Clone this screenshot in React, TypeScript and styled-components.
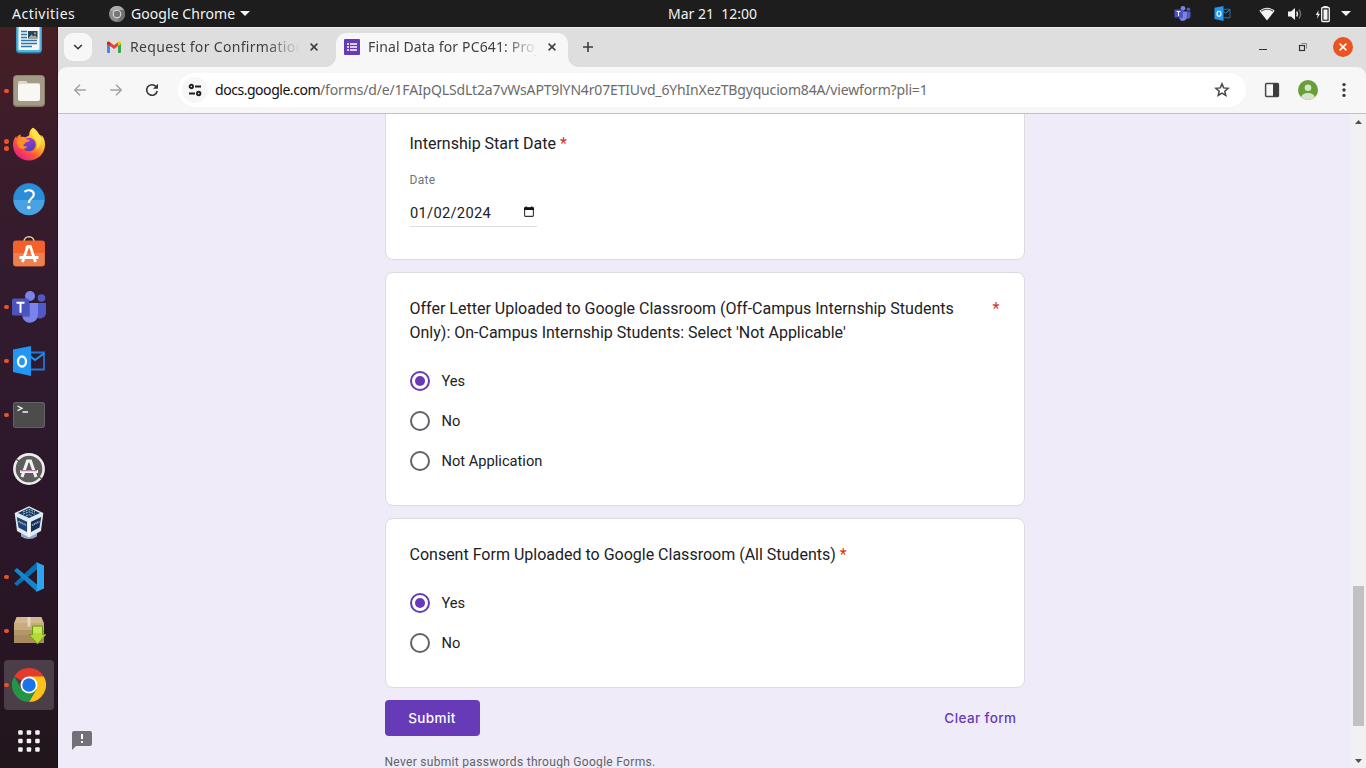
import React from "react";
import styled, { createGlobalStyle, css } from "styled-components";

const Global = createGlobalStyle`
  * { box-sizing: border-box; }
  html, body { margin: 0; padding: 0; overflow: hidden; }
  body { font-family: "Noto Sans", "Open Sans", sans-serif; }
  svg { display: block; flex: none; }
`;

const Desktop = styled.div`
  width: 1366px;
  height: 768px;
  display: flex;
  flex-direction: column;
  overflow: hidden;
  background: #1d1d1d;
`;

const TopBar = styled.header`
  height: 27px;
  flex: none;
  display: grid;
  grid-template-columns: 1fr auto 1fr;
  align-items: center;
  padding: 0 15px 0 12px;
  background: #1d1d1d;
  color: #f2f2f2;
  font-size: 14px;
  line-height: 27px;
`;

const BarGroup = styled.div<{ $end?: boolean }>`
  display: flex;
  align-items: center;
  justify-content: ${(p) => (p.$end ? "flex-end" : "flex-start")};
`;

const BarText = styled.span<{ $spacing?: number; $width?: number; $ml?: number }>`
  white-space: pre;
  letter-spacing: ${(p) => p.$spacing ?? 0}px;
  width: ${(p) => (p.$width ? `${p.$width}px` : "auto")};
  margin-left: ${(p) => p.$ml ?? 0}px;
`;

const TrayItem = styled.span<{ $ml: number }>`
  display: flex;
  margin-left: ${(p) => p.$ml}px;
`;

const Workspace = styled.div`
  flex: 1;
  min-height: 0;
  display: flex;
`;

const Dock = styled.nav`
  width: 58px;
  flex: none;
  overflow: hidden;
  background: linear-gradient(#471f24 0%, #3b1c2b 16%, #321b2e 35%, #2c172a 62%, #271523 85%, #21161c 100%);
  border-right: 1px solid rgba(0, 0, 0, 0.25);
`;

const DockList = styled.div`
  margin-top: -17px;
  display: flex;
  flex-direction: column;
`;

const DockItem = styled.div`
  height: 54px;
  display: grid;
  grid-template-columns: 4px 50px;
  align-items: center;
`;

const DockTile = styled.div<{ $active?: boolean; $shift?: number }>`
  height: 50px;
  display: flex;
  align-items: center;
  justify-content: center;
  border-radius: 4px;
  background: ${(p) => (p.$active ? "#4c3e49" : "transparent")};
  position: relative;
  & > svg {
    transform: translateY(${(p) => p.$shift ?? 0}px);
  }
`;

const Dots = styled.span`
  position: absolute;
  left: 0;
  top: 0;
  bottom: 0;
  display: flex;
  flex-direction: column;
  justify-content: center;
  gap: 2px;
  i {
    width: 4.6px;
    height: 4.6px;
    border-radius: 50%;
    background: #e95420;
  }
`;

const Browser = styled.main`
  flex: 1;
  min-width: 0;
  display: flex;
  flex-direction: column;
  background: #dedede;
`;

const TabStrip = styled.div`
  height: 40px;
  flex: none;
  display: flex;
  align-items: flex-start;
  padding: 5px 13px 0 6px;
  border-top: 1px solid #ededed;
  color: #3f3f3f;
`;

const TabSearch = styled.div`
  width: 28px;
  height: 28px;
  border-radius: 9px;
  background: #f7f7f7;
  display: flex;
  align-items: center;
  justify-content: center;
`;

const Tab = styled.div<{ $active?: boolean }>`
  width: ${(p) => (p.$active ? 232 : 244)}px;
  height: 34px;
  display: flex;
  align-items: center;
  padding: 0 8px 6px ${(p) => (p.$active ? 8 : 14)}px;
  position: relative;
  ${(p) =>
    p.$active &&
    css`
      background: #f7f7f7;
      border-radius: 10px 10px 0 0;
      &::before,
      &::after {
        content: "";
        position: absolute;
        bottom: 0;
        width: 10px;
        height: 10px;
      }
      &::before {
        left: -10px;
        background: radial-gradient(circle at 0 0, transparent 9.5px, #f7f7f7 10px);
      }
      &::after {
        right: -10px;
        background: radial-gradient(circle at 100% 0, transparent 9.5px, #f7f7f7 10px);
      }
    `}
`;

const TabTitle = styled.span<{ $spacing: number }>`
  width: 168px;
  margin-left: 8px;
  overflow: hidden;
  white-space: nowrap;
  font-size: 14px;
  line-height: 20px;
  letter-spacing: ${(p) => p.$spacing}px;
  mask-image: linear-gradient(90deg, #000 136px, transparent 170px);
`;

const TabClose = styled.span`
  width: 16px;
  height: 16px;
  margin-left: 8px;
  display: flex;
  align-items: center;
  justify-content: center;
`;

const NewTab = styled.span`
  width: 28px;
  height: 28px;
  margin-left: 6px;
  display: flex;
  align-items: center;
  justify-content: center;
`;

const WindowControls = styled.div`
  flex: 1;
  height: 28px;
  display: flex;
  align-items: center;
  justify-content: flex-end;
`;

const CloseWindow = styled.span`
  width: 20px;
  height: 20px;
  margin-left: 26px;
  border-radius: 50%;
  background: #e95420;
  display: flex;
  align-items: center;
  justify-content: center;
`;

const Toolbar = styled.div`
  height: 47px;
  flex: none;
  display: flex;
  align-items: center;
  padding: 0 12px 0 14px;
  background: #f7f7f7;
  border-bottom: 1px solid #c2c2c2;
  border-radius: 9px 9px 0 0;
`;

const NavButton = styled.span<{ $mr: number }>`
  width: 16px;
  height: 16px;
  margin-right: ${(p) => p.$mr}px;
`;

const Omnibox = styled.div`
  width: 1068px;
  height: 34px;
  border-radius: 17px;
  background: #fff;
  display: flex;
  align-items: center;
  padding: 0 16px 0 4px;
`;

const SiteInfo = styled.span`
  width: 26px;
  height: 26px;
  border-radius: 50%;
  background: #f7f7f7;
  display: flex;
  align-items: center;
  justify-content: center;
`;

const Url = styled.span`
  flex: 1;
  margin-left: 7px;
  font-size: 14px;
  line-height: 20px;
  color: #6b6b6b;
  white-space: nowrap;
`;

const UrlPart = styled.span<{ $strong?: boolean; $spacing: number }>`
  color: ${(p) => (p.$strong ? "#111" : "#6b6b6b")};
  letter-spacing: ${(p) => p.$spacing}px;
`;

const ToolIcon = styled.span<{ $ml: number }>`
  margin-left: ${(p) => p.$ml}px;
`;

const Viewport = styled.div`
  flex: 1;
  min-height: 0;
  display: flex;
  background: #efebf8;
`;

const Page = styled.div`
  flex: 1;
  overflow: hidden;
  position: relative;
  padding-left: 326.5px;
  font-family: Roboto, "Liberation Sans", sans-serif;
  color: #202124;
`;

const Form = styled.div`
  width: 640px;
  margin-top: -7px;
  display: flex;
  flex-direction: column;
  gap: 12px;
`;

const Card = styled.section`
  background: #fff;
  border: 1px solid #dadce0;
  border-radius: 8px;
  padding: 24px;
`;

const QuestionRow = styled.div`
  display: flex;
  justify-content: space-between;
`;

const Question = styled.div`
  font-size: 16px;
  line-height: 24px;
  white-space: pre;
`;

const Required = styled.span`
  color: #d93025;
  font-size: 16px;
  line-height: 24px;
`;

const DateLabel = styled.div`
  margin-top: 16px;
  font-size: 12px;
  line-height: 16px;
  letter-spacing: 0.3px;
  color: #70757a;
`;

const DateField = styled.div`
  width: 127px;
  height: 31px;
  margin: 8px 0 8px;
  padding: 3px 3px 0 0.5px;
  display: flex;
  align-items: center;
  justify-content: space-between;
  border-bottom: 1px solid #dcdcdc;
  font-size: 14.67px;
  letter-spacing: 0.3px;
  span {
    padding-top: 1px;
  }
  svg {
    margin-top: -1px;
  }
`;

const Options = styled.div`
  margin-top: 16px;
`;

const Option = styled.label`
  height: 40px;
  display: flex;
  align-items: center;
  gap: 12px;
  font-size: 14.67px;
`;

const Radio = styled.span<{ $on?: boolean }>`
  width: 20px;
  height: 20px;
  border-radius: 50%;
  border: 2px solid ${(p) => (p.$on ? "#673ab7" : "#5f6368")};
  display: flex;
  align-items: center;
  justify-content: center;
  &::after {
    content: "";
    width: 10px;
    height: 10px;
    border-radius: 50%;
    background: ${(p) => (p.$on ? "#673ab7" : "transparent")};
  }
`;

const Actions = styled.div`
  display: flex;
  justify-content: space-between;
  align-items: center;
  font-family: Inter, sans-serif;
  font-size: 13.5px;
  font-weight: 500;
`;

const Submit = styled.span`
  width: 95px;
  height: 36px;
  border-radius: 4px;
  background: #673ab7;
  color: #fff;
  line-height: 36px;
  text-align: center;
  letter-spacing: 0.4px;
`;

const Clear = styled.span`
  color: #673ab7;
  padding-right: 8px;
  letter-spacing: 0.4px;
`;

const Warning = styled.div`
  margin-top: 6px;
  font-size: 12px;
  line-height: 16px;
  letter-spacing: 0.3px;
  color: #5f6368;
`;

const Feedback = styled.span`
  position: absolute;
  left: 14px;
  bottom: 17px;
`;

const Scrollbar = styled.div`
  width: 15px;
  flex: none;
  display: flex;
  flex-direction: column;
  align-items: center;
  padding: 6px 0 5px;
  background: #f1f1f1;
`;

const Thumb = styled.span`
  width: 11px;
  height: 140px;
  margin-top: auto;
  margin-bottom: 33px;
  background: #c1c1c1;
`;

const DocsIcon = () => (
  <svg width="34" height="34" viewBox="0 0 34 34">
    <rect x="4" y="2" width="26" height="31" rx="4" fill="#2683ad" />
    <rect x="4.5" y="2" width="25" height="29.500" rx="3" fill="#4fb5dd" />
    <rect x="6.500" y="3" width="21" height="26.500" rx="1.500" fill="#f6f6f6" />
    <path d="M9 11h6M9 14h6M9 17h6M9 20h16M9 23h16M9 26h11" stroke="#2a77ae" strokeWidth="1.300" />
    <rect x="16" y="10.500" width="9.500" height="7.500" fill="#26465f" />
    <path d="M16 18l3.500-4 2 2 1.500-1.500 2.500 3.500z" fill="#b9a48a" />
    <circle cx="23" cy="12.700" r="1" fill="#f0a04b" />
  </svg>
);

const FilesIcon = () => (
  <svg width="34" height="34" viewBox="0 0 34 34">
    <rect x="1" y="1" width="32" height="32" rx="4" fill="#837b69" />
    <rect x="1.800" y="1.800" width="30.400" height="29.600" rx="3.500" fill="#a39b86" />
    <path d="M6 8.500q0-1.500 1.500-1.500h6q1 0 1.600 1l.7 1h10.700q1.500 0 1.500 1.500v10H6z" fill="#ddd8cb" />
    <rect x="6" y="10" width="22" height="17" rx="2" fill="#f8f7f4" />
  </svg>
);

const FirefoxIcon = () => (
  <svg width="34" height="34" viewBox="0 0 34 34">
    <defs>
      <linearGradient id="ffBody" x1="0.85" y1="0.1" x2="0.2" y2="0.95">
        <stop offset="0" stopColor="#fff04d" />
        <stop offset="0.35" stopColor="#ffb52b" />
        <stop offset="0.65" stopColor="#ff5a36" />
        <stop offset="1" stopColor="#e8198b" />
      </linearGradient>
      <linearGradient id="ffGlobe" x1="0" y1="0" x2="0.3" y2="1">
        <stop offset="0" stopColor="#b335e6" />
        <stop offset="1" stopColor="#5640b5" />
      </linearGradient>
    </defs>
    <path
      d="M21 .8c2.800 1.800 4.500 4 5.600 6.300.9.400 2.200 1.500 3 2.800.2-.5 0-1.500-.2-2.100C32 10.500 33 14 33 17.500 33 26.600 26 33.500 17 33.500S1 26.500 1 18c0-3.700 1-6.700 3.300-9.100l.2 2.300C5.600 9.200 7 8 8.300 7.300l.5 2.700c1.500-.5 3.200-.4 5 .2.500-.3 2.800-1.200 3.400-1.900C17 5 18.500 2.300 21 .8z"
      fill="url(#ffBody)"
    />
    <circle cx="17" cy="17.500" r="6.800" fill="url(#ffGlobe)" />
    <path
      d="M5 13.500c2-2 5-2.700 8.500-2 .9.900 2.500 1.400 4.200 1.400-.3 1.400-1.900 2-3.700 2.400-.7 1.300-2.200 1.500-2.700 3 .8 1.200 2.500 1.500 4.200.9-1.700 2.500-4 3.100-6.500 2.300C6.500 20.500 4.300 17 5 13.500z"
      fill="#ff9226"
    />
    <path d="M21 .8c-2.500 4-1.700 7.200 1.500 10.500 3.200 3.200 3.700 7.200 1.700 11.200 5-3 6.300-9.500 3.300-13.500C26.500 5.500 24 2.600 21 .8z" fill="#ffe14a" />
  </svg>
);

const HelpIcon = () => (
  <svg width="34" height="34" viewBox="0 0 34 34">
    <circle cx="17" cy="17" r="16" fill="#1c6fb3" />
    <circle cx="17" cy="17" r="15.300" fill="#2b8cd8" />
    <path d="M1.700 18h30.600a15.300 15.300 0 0 1-30.600 0z" fill="#49a3e2" />
    <path d="M12.500 9.800c3-2.600 9.300-2 9.300 2.600 0 4-5 3.800-5 8.600" fill="none" stroke="#fff" strokeWidth="2.200" />
    <circle cx="16.800" cy="25.500" r="1.800" fill="#fff" />
  </svg>
);

const SoftwareIcon = () => (
  <svg width="34" height="34" viewBox="0 0 34 34">
    <path d="M12 7c0-7 10-7 10 0" fill="none" stroke="#e6cf9e" strokeWidth="1.700" />
    <rect x="1" y="5.500" width="32" height="26" rx="3" fill="#e2632f" />
    <rect x="1.500" y="6" width="31" height="13" rx="3" fill="#f4622a" />
    <path d="M1.500 18h31v10q0 3-3 3h-25q-3 0-3-3z" fill="#ee7f4e" />
    <path d="M10.500 27l5.300-15.500h2.500L23.500 27M7.500 22.500h19" fill="none" stroke="#fff" strokeWidth="2.800" />
    <path d="M14 13l3-1.500" stroke="#fff" strokeWidth="3" />
  </svg>
);

const TeamsIcon = ({ size = 36 }: { size?: number }) => (
  <svg width={size} height={size} viewBox="0 0 36 36">
    <circle cx="19" cy="7" r="5" fill="#7b83eb" />
    <circle cx="30.500" cy="9" r="3.800" fill="#5059c9" />
    <path d="M25 14h9.500q.5 0 .5.800v9a6 6 0 0 1-9 5z" fill="#5059c9" />
    <path d="M12 14h15v11.500a8 8 0 0 1-15.500 3z" fill="#7b83eb" />
    <path d="M12 14h7v14h-7z" fill="#5a62c4" />
    <rect x="1" y="9.500" width="17" height="17" rx="1.500" fill="#4b53bc" />
    <path d="M5.500 13.700h8M9.500 13.700v10" stroke="#fff" strokeWidth="2" />
  </svg>
);

const OutlookIcon = ({ size = 34 }: { size?: number }) => (
  <svg width={size} height={size} viewBox="0 0 34 34">
    <path d="M18 8.500h14v17H18" fill="none" stroke="#1f78d4" strokeWidth="1.800" />
    <path d="M18 12l5 4 9-6.500" fill="none" stroke="#2196f3" strokeWidth="1.800" />
    <path d="M1 5.500L19 2v30L1 28z" fill="#2196f3" />
    <ellipse cx="10" cy="17.500" rx="4" ry="5" fill="none" stroke="#fff" strokeWidth="2.300" />
  </svg>
);

const TerminalIcon = () => (
  <svg width="34" height="34" viewBox="0 0 34 34">
    <rect x="1" y="4" width="32" height="26" rx="3" fill="#6b6b6b" />
    <rect x="1.800" y="4.800" width="30.400" height="24.400" rx="2.500" fill="#4c4c4c" />
    <path d="M5.500 8l4.500 2.300-4.500 2.300M10.500 14h5.500" fill="none" stroke="#f4f4f4" strokeWidth="1.300" />
  </svg>
);

const UpdaterIcon = () => (
  <svg width="34" height="34" viewBox="0 0 34 34">
    <circle cx="17" cy="17" r="14.600" fill="#5d5d5d" stroke="#eeeeea" strokeWidth="2.600" />
    <path d="M4 7l4 3M30 27l-4-3" stroke="#5d5d5d" strokeWidth="1.500" />
    <path d="M10 25l5.500-16h3L24 25M8 19.500h18" fill="none" stroke="#f3f3ef" strokeWidth="3" />
    <path d="M8.500 18.700h16.500" stroke="#a05b9a" strokeWidth="1" />
  </svg>
);

const VirtualBoxIcon = () => (
  <svg width="34" height="34" viewBox="0 0 34 34">
    <path d="M9 26l8-3 8 3v4.500q-8 5-16 0z" fill="#8ea5c4" />
    <path d="M17 .3L31.300 7l-2.300 18L17 31.500 5 25 2.700 7z" fill="#dfe8f3" />
    <path d="M17 1.800l11 5.200-11 5L6 7z" fill="#173d63" />
    <path d="M11 6l6-2.500L23 6M11 8.200l6-2.400 6 2.400M14 10l3-1.400 3 1.400" fill="none" stroke="#b9d0e4" strokeWidth="1" strokeDasharray="2 1" />
    <path d="M4.800 11l10.200 4.700v10.300L6.500 21.600z" fill="#1d4472" />
    <path d="M29.200 11L19 15.700v10.300l8.500-4.400z" fill="#143258" />
    <path d="M6.500 15.500l7.500 3.700M20 19.300l7.500-3.800" stroke="#9fb6d2" strokeWidth="1.700" strokeDasharray="1.300 .6" />
    <path d="M17 13.500v17" stroke="#fff" strokeWidth="1.500" />
  </svg>
);

const CodeIcon = () => (
  <svg width="34" height="34" viewBox="0 0 34 34">
    <path d="M2 23.500l3 2.500L25 9.500V2z" fill="#0b70b3" />
    <path d="M2 10.500L5 8l20 16.500V32z" fill="#1286cf" />
    <path d="M24 2l8 3.500v23L24 32q1-.8 1-2.500v-25Q25 2.800 24 2z" fill="#2ba5f0" />
  </svg>
);

const PackageIcon = () => (
  <svg width="34" height="34" viewBox="0 0 34 34">
    <path d="M4.500 3h25L32 9.500H2z" fill="#d3b78e" />
    <path d="M2 9h30v20H2z" fill="#b59669" />
    <path d="M2 9h30v7H2z" fill="#c7aa7d" />
    <path d="M2 21h30v8H2z" fill="#a98b60" />
    <path d="M15.500 3h3v9.500h-3z" fill="#e5d8c3" />
    <path d="M20.500 12h10v8.500H34L25.500 30 17 20.500h3.500z" fill="#b4da3a" stroke="#739a14" strokeWidth="1" />
    <path d="M21.500 13h8v6h-8z" fill="#c8ea59" />
  </svg>
);

const ChromeIcon = () => (
  <svg width="34" height="34" viewBox="0 0 48 48">
    <path d="M24 24L3.200 12A24 24 0 0 1 44.800 12z" fill="#e33b2e" />
    <path d="M24 12h20.800A24 24 0 0 1 24 48l10.400-18z" fill="#fcc016" />
    <path d="M3.200 12A24 24 0 0 0 24 48l10.400-18L13.600 30z" fill="#249547" />
    <circle cx="24" cy="24" r="12" fill="#fff" />
    <circle cx="24" cy="24" r="9.500" fill="#1a73e8" />
  </svg>
);

const AppsIcon = () => (
  <svg width="24" height="24" viewBox="0 0 24 24">
    {[1.2, 9.7, 18.2].map((y) =>
      [1.2, 9.7, 18.2].map((x) => <rect key={`${x}-${y}`} x={x} y={y} width="4.500" height="4.500" rx="1" fill="#f2f2f2" />)
    )}
  </svg>
);

const CrossIcon = ({ color = "#3c3c3c", size = 8 }: { color?: string; size?: number }) => (
  <svg width={size} height={size} viewBox="0 0 8 8">
    <path d="M.6.6l6.800 6.800M7.400.6L.6 7.400" stroke={color} strokeWidth="1.500" />
  </svg>
);

const Triangle = ({ up, color = "#f2f2f2", w = 10, h = 5 }: { up?: boolean; color?: string; w?: number; h?: number }) => (
  <svg width={w} height={h} viewBox="0 0 10 5" preserveAspectRatio="none">
    <path d={up ? "M0 5h10L5 0z" : "M0 0h10L5 5z"} fill={color} />
  </svg>
);

const BackIcon = () => (
  <svg width="16" height="16" viewBox="0 0 16 16">
    <path d="M13.800 8H3M8 2.700L2.700 8 8 13.300" fill="none" stroke="#a3a3a3" strokeWidth="1.500" />
  </svg>
);

const ForwardIcon = () => (
  <svg width="16" height="16" viewBox="0 0 16 16">
    <path d="M2.200 8H13M8 2.700L13.300 8 8 13.300" fill="none" stroke="#a3a3a3" strokeWidth="1.500" />
  </svg>
);

const ReloadIcon = () => (
  <svg width="16" height="16" viewBox="0 0 16 16">
    <path d="M13.200 9A5.300 5.300 0 1 1 12 4.500" fill="none" stroke="#383838" strokeWidth="1.600" />
    <path d="M14 1.800v5H9z" fill="#383838" />
  </svg>
);

const GmailIcon = () => (
  <svg width="16" height="16" viewBox="0 0 16 16">
    <path d="M1 4.500l3 2.300V14H2q-1 0-1-1z" fill="#4285f4" />
    <path d="M15 4.500l-3 2.300V14h2q1 0 1-1z" fill="#34a853" />
    <path d="M4 3.200l4 3 4-3v3.900l-4 3-4-3z" fill="#ea4335" />
    <path d="M1 4.200C1 2.300 2.700 2 4 3.200v3.900L1 4.900z" fill="#c5221f" />
    <path d="M15 4.200c0-1.900-1.700-2.200-3-1v3.900l3-2.200z" fill="#fbbc04" />
  </svg>
);

const FormsIcon = () => (
  <svg width="16" height="16" viewBox="0 0 16 16">
    <rect width="16" height="16" rx="1" fill="#673ab7" />
    <path d="M3 5h2M6 5h7M3 8h2M6 8h7M3 11h2M6 11h7" stroke="#fff" strokeWidth="1.700" />
  </svg>
);

const SiteIcon = () => (
  <svg width="14" height="14" viewBox="0 0 14 14">
    <g fill="none" stroke="#1f1f1f" strokeWidth="1.900">
      <circle cx="3.300" cy="3.500" r="1.700" />
      <path d="M7 3.500h6M1 10.500h6" />
      <circle cx="10.700" cy="10.500" r="1.700" />
    </g>
  </svg>
);

const StarIcon = () => (
  <svg width="16" height="16" viewBox="0 0 16 16">
    <path d="M8 1.900l1.700 4 4.400.4-3.300 2.900 1 4.300L8 11.200l-3.800 2.300 1-4.300-3.300-2.900 4.400-.4z" fill="none" stroke="#474747" strokeWidth="1.500" />
  </svg>
);

const SidePanelIcon = () => (
  <svg width="16" height="16" viewBox="0 0 16 16">
    <rect x="1.600" y="1.600" width="12.800" height="12.800" rx="1" fill="none" stroke="#474747" strokeWidth="1.500" />
    <path d="M9 1.500h5.500v13H9z" fill="#3c3c3c" />
  </svg>
);

const AvatarIcon = () => (
  <svg width="20" height="20" viewBox="0 0 20 20">
    <defs>
      <clipPath id="avatarClip">
        <circle cx="10" cy="10" r="10" />
      </clipPath>
    </defs>
    <g clipPath="url(#avatarClip)">
      <rect width="20" height="20" fill="#689f38" />
      <circle cx="10" cy="7.800" r="3.300" fill="#d5e5c8" />
      <ellipse cx="10" cy="17.200" rx="6.800" ry="4.300" fill="#d5e5c8" />
    </g>
  </svg>
);

const dockApps: { icon: React.ReactNode; dots?: number; active?: boolean; shift?: number }[] = [
  { icon: <DocsIcon />, shift: 0.5 },
  { icon: <FilesIcon />, dots: 1 },
  { icon: <FirefoxIcon />, dots: 2, shift: -1 },
  { icon: <HelpIcon /> },
  { icon: <SoftwareIcon />, shift: -1 },
  { icon: <TeamsIcon />, dots: 1 },
  { icon: <OutlookIcon />, dots: 1 },
  { icon: <TerminalIcon />, dots: 1 },
  { icon: <UpdaterIcon /> },
  { icon: <VirtualBoxIcon /> },
  { icon: <CodeIcon />, dots: 1 },
  { icon: <PackageIcon />, dots: 1 },
  { icon: <ChromeIcon />, dots: 1, active: true },
  { icon: <AppsIcon />, shift: 2 },
];

const RadioList = ({ items }: { items: string[] }) => (
  <Options>
    {items.map((item, i) => (
      <Option key={item}>
        <Radio $on={i === 0} />
        {item}
      </Option>
    ))}
  </Options>
);

export default function App() {
  return (
    <Desktop>
      <Global />
      <TopBar>
        <BarGroup>
          <BarText $width={97} $spacing={0.5}>Activities</BarText>
          <svg width="16" height="16" viewBox="0 0 16 16">
            <circle cx="8" cy="8" r="8" fill="#8c8c8c" />
            <path d="M8 8L1 4a8 8 0 0 1 14 0z" fill="#aaa" />
            <path d="M8 4h7a8 8 0 0 1-7 12l3.500-6z" fill="#707070" />
            <circle cx="8" cy="8" r="4.300" fill="#ddd" />
            <circle cx="8" cy="8" r="3.200" fill="#777" />
          </svg>
          <BarText $ml={6} $spacing={0.06}>Google Chrome</BarText>
          <TrayItem $ml={5}><Triangle /></TrayItem>
        </BarGroup>
        <BarText $ml={62}>Mar 21  12:00</BarText>
        <BarGroup $end>
          <TeamsIcon size={17} />
          <TrayItem $ml={23}><OutlookIcon size={17} /></TrayItem>
          <TrayItem $ml={28}>
            <svg width="16" height="14" viewBox="0 0 16 14">
              <path d="M.3 3.800Q8-2.500 15.700 3.800L8 13.500z" fill="#f2f2f2" />
              <path d="M2 4.200Q8 .3 14 4.200" fill="none" stroke="#555" strokeWidth="1.200" />
            </svg>
          </TrayItem>
          <TrayItem $ml={12}>
            <svg width="16" height="14" viewBox="0 0 16 14">
              <path d="M1 4.500h3L8 1v12L4 9.500H1z" fill="#f2f2f2" />
              <path d="M9.700 4.500q1.600 2.500 0 5" fill="none" stroke="#f2f2f2" strokeWidth="1.400" />
              <path d="M12 2.500q3.200 4.500 0 9" fill="none" stroke="#777" strokeWidth="1.300" />
            </svg>
          </TrayItem>
          <TrayItem $ml={12}>
            <svg width="16" height="18" viewBox="0 0 16 18">
              <path d="M3.600 5L.8 10h2L2 14l3-5.300H3.200z" fill="#f2f2f2" />
              <path d="M8.500 1h4v1.300h-4z" fill="#f2f2f2" />
              <rect x="6.700" y="2.500" width="7.600" height="14" rx="1" fill="none" stroke="#f2f2f2" strokeWidth="1.300" />
              <rect x="8.500" y="4.500" width="4" height="10.200" fill="#f2f2f2" />
            </svg>
          </TrayItem>
          <TrayItem $ml={10}><Triangle /></TrayItem>
        </BarGroup>
      </TopBar>
      <Workspace>
        <Dock>
          <DockList>
            {dockApps.map((app, i) => (
              <DockItem key={i}>
                <span />
                <DockTile $active={app.active} $shift={app.shift}>
                  {app.icon}
                  {app.dots && <Dots>{Array.from({ length: app.dots }, (_, d) => <i key={d} />)}</Dots>}
                </DockTile>
              </DockItem>
            ))}
          </DockList>
        </Dock>
        <Browser>
          <TabStrip>
            <TabSearch>
              <svg width="10" height="6" viewBox="0 0 10 6">
                <path d="M1.200 1L5 4.700 8.800 1" fill="none" stroke="#333" strokeWidth="1.600" />
              </svg>
            </TabSearch>
            <Tab>
              <GmailIcon />
              <TabTitle $spacing={0.32}>Request for Confirmation</TabTitle>
              <TabClose><CrossIcon /></TabClose>
            </Tab>
            <Tab $active>
              <FormsIcon />
              <TabTitle $spacing={0.14}>Final Data for PC641: Project</TabTitle>
              <TabClose><CrossIcon /></TabClose>
            </Tab>
            <NewTab>
              <svg width="10" height="10" viewBox="0 0 10 10">
                <path d="M0 5h10M5 0v10" stroke="#3c3c3c" strokeWidth="1.600" />
              </svg>
            </NewTab>
            <WindowControls>
              <svg width="48" height="10" viewBox="0 0 48 10">
                <path d="M0 7.500h8" stroke="#333" strokeWidth="1" />
                <path d="M42.500 1.500h5v5" fill="none" stroke="#888" strokeWidth="1" />
                <rect x="40.500" y="3.500" width="5" height="5" fill="none" stroke="#333" strokeWidth="1.200" />
              </svg>
              <CloseWindow><CrossIcon color="#fff" /></CloseWindow>
            </WindowControls>
          </TabStrip>
          <Toolbar>
            <NavButton $mr={20}><BackIcon /></NavButton>
            <NavButton $mr={20}><ForwardIcon /></NavButton>
            <NavButton $mr={18}><ReloadIcon /></NavButton>
            <Omnibox>
              <SiteInfo><SiteIcon /></SiteInfo>
              <Url>
                <UrlPart $strong $spacing={-0.46}>docs.google.com</UrlPart>
                <UrlPart $spacing={-0.16}>/forms/d/e/1FAIpQLSdLt2a7vWsAPT9lYN4r07ETIUvd_6YhInXezTBgyquciom84A/viewform?pli=1</UrlPart>
              </Url>
              <StarIcon />
            </Omnibox>
            <ToolIcon $ml={18}><SidePanelIcon /></ToolIcon>
            <ToolIcon $ml={18}><AvatarIcon /></ToolIcon>
            <ToolIcon $ml={18}>
              <svg width="16" height="16" viewBox="0 0 16 16">
                {[2.6, 8, 13.4].map((y) => <circle key={y} cx="8" cy={y} r="1.700" fill="#3c3c3c" />)}
              </svg>
            </ToolIcon>
          </Toolbar>
          <Viewport>
            <Page>
              <Form>
                <Card>
                  <Question>Internship Start Date <Required>*</Required></Question>
                  <DateLabel>Date</DateLabel>
                  <DateField>
                    <span>01/02/2024</span>
                    <svg width="10" height="12" viewBox="0 0 10 12">
                      <rect x=".6" y="1.800" width="8.800" height="8.600" rx=".8" fill="none" stroke="#333" strokeWidth="1.100" />
                      <path d="M0 1.500h10V4H0zM1.500.5h1.500v2H1.500zM7 .5h1.500v2H7z" fill="#111" />
                    </svg>
                  </DateField>
                </Card>
                <Card>
                  <QuestionRow>
                    <Question>{"Offer Letter Uploaded to Google Classroom (Off-Campus Internship Students\nOnly): On-Campus Internship Students: Select 'Not Applicable'"}</Question>
                    <Required>*</Required>
                  </QuestionRow>
                  <RadioList items={["Yes", "No", "Not Application"]} />
                </Card>
                <Card>
                  <Question>Consent Form Uploaded to Google Classroom (All Students) <Required>*</Required></Question>
                  <RadioList items={["Yes", "No"]} />
                </Card>
                <Actions>
                  <Submit>Submit</Submit>
                  <Clear>Clear form</Clear>
                </Actions>
                <Warning>Never submit passwords through Google Forms.</Warning>
              </Form>
              <Feedback>
                <svg width="20" height="21" viewBox="0 0 20 21">
                  <path d="M2 1h16q2 0 2 2v11q0 2-2 2H4l-4 4V3q0-2 2-2z" fill="#737077" />
                  <path d="M9 4h2v5H9zM9 11h2v2H9z" fill="#fff" />
                </svg>
              </Feedback>
            </Page>
            <Scrollbar>
              <Triangle up color="#505050" w={7} h={4} />
              <Thumb />
              <Triangle color="#505050" w={7} h={4} />
            </Scrollbar>
          </Viewport>
        </Browser>
      </Workspace>
    </Desktop>
  );
}
